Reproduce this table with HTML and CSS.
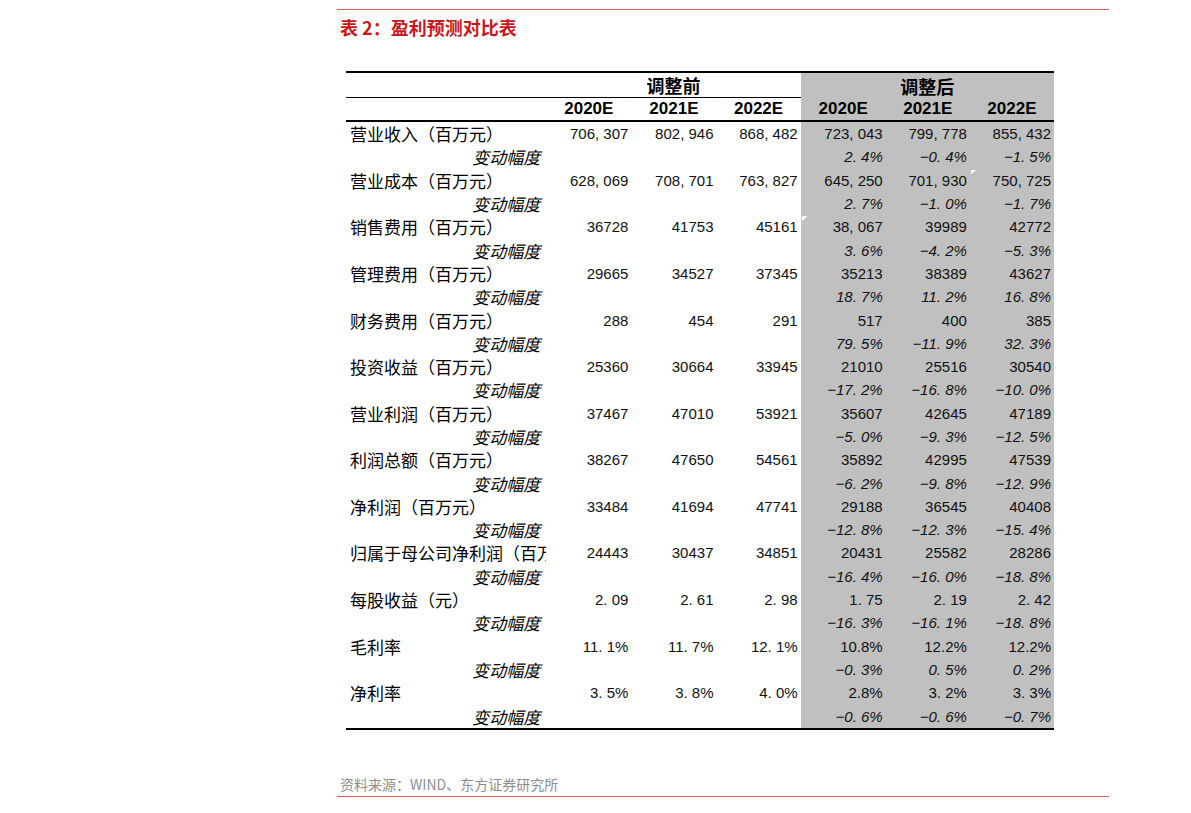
FILE: index.html
```html
<!DOCTYPE html>
<html lang="zh-CN">
<head>
<meta charset="utf-8">
<title>表 2：盈利预测对比表</title>
<link rel="stylesheet" href="styles.css">
</head>
<body>
<div class="report">
  <h2 class="title">表 2：盈利预测对比表</h2>
  <table class="fc">
    <colgroup>
      <col class="c-lab"><col class="c-n"><col class="c-n"><col class="c-n3"><col class="c-n"><col class="c-n3"><col class="c-n3">
    </colgroup>
    <thead>
      <tr class="h1">
        <th class="lab ruled"></th>
        <th colspan="3" class="grp ruled">调整前</th>
        <th colspan="3" class="grp adj">调整后</th>
      </tr>
      <tr class="h2">
        <th class="lab"></th>
        <th class="yr">2020E</th><th class="yr">2021E</th><th class="yr">2022E</th>
        <th class="yr adj">2020E</th><th class="yr adj">2021E</th><th class="yr adj">2022E</th>
      </tr>
    </thead>
    <tbody>
      <tr><td class="lab">营业收入（百万元）</td><td class="num">706, 307</td><td class="num">802, 946</td><td class="num">868, 482</td><td class="num adj">723, 043</td><td class="num adj">799, 778</td><td class="num adj">855, 432</td></tr>
      <tr class="chg"><td class="lab sub">变动幅度</td><td></td><td></td><td></td><td class="num adj">2. 4%</td><td class="num adj">−0. 4%</td><td class="num adj">−1. 5%</td></tr>
      <tr><td class="lab">营业成本（百万元）</td><td class="num">628, 069</td><td class="num">708, 701</td><td class="num">763, 827</td><td class="num adj">645, 250</td><td class="num adj">701, 930</td><td class="num adj mark">750, 725</td></tr>
      <tr class="chg"><td class="lab sub">变动幅度</td><td></td><td></td><td></td><td class="num adj">2. 7%</td><td class="num adj">−1. 0%</td><td class="num adj">−1. 7%</td></tr>
      <tr><td class="lab">销售费用（百万元）</td><td class="num">36728</td><td class="num">41753</td><td class="num">45161</td><td class="num adj mark">38, 067</td><td class="num adj">39989</td><td class="num adj">42772</td></tr>
      <tr class="chg"><td class="lab sub">变动幅度</td><td></td><td></td><td></td><td class="num adj">3. 6%</td><td class="num adj">−4. 2%</td><td class="num adj">−5. 3%</td></tr>
      <tr><td class="lab">管理费用（百万元）</td><td class="num">29665</td><td class="num">34527</td><td class="num">37345</td><td class="num adj">35213</td><td class="num adj">38389</td><td class="num adj">43627</td></tr>
      <tr class="chg"><td class="lab sub">变动幅度</td><td></td><td></td><td></td><td class="num adj">18. 7%</td><td class="num adj">11. 2%</td><td class="num adj">16. 8%</td></tr>
      <tr><td class="lab">财务费用（百万元）</td><td class="num">288</td><td class="num">454</td><td class="num">291</td><td class="num adj">517</td><td class="num adj">400</td><td class="num adj">385</td></tr>
      <tr class="chg"><td class="lab sub">变动幅度</td><td></td><td></td><td></td><td class="num adj">79. 5%</td><td class="num adj">−11. 9%</td><td class="num adj">32. 3%</td></tr>
      <tr><td class="lab">投资收益（百万元）</td><td class="num">25360</td><td class="num">30664</td><td class="num">33945</td><td class="num adj">21010</td><td class="num adj">25516</td><td class="num adj">30540</td></tr>
      <tr class="chg"><td class="lab sub">变动幅度</td><td></td><td></td><td></td><td class="num adj">−17. 2%</td><td class="num adj">−16. 8%</td><td class="num adj">−10. 0%</td></tr>
      <tr><td class="lab">营业利润（百万元）</td><td class="num">37467</td><td class="num">47010</td><td class="num">53921</td><td class="num adj">35607</td><td class="num adj">42645</td><td class="num adj">47189</td></tr>
      <tr class="chg"><td class="lab sub">变动幅度</td><td></td><td></td><td></td><td class="num adj">−5. 0%</td><td class="num adj">−9. 3%</td><td class="num adj">−12. 5%</td></tr>
      <tr><td class="lab">利润总额（百万元）</td><td class="num">38267</td><td class="num">47650</td><td class="num">54561</td><td class="num adj">35892</td><td class="num adj">42995</td><td class="num adj">47539</td></tr>
      <tr class="chg"><td class="lab sub">变动幅度</td><td></td><td></td><td></td><td class="num adj">−6. 2%</td><td class="num adj">−9. 8%</td><td class="num adj">−12. 9%</td></tr>
      <tr><td class="lab">净利润（百万元）</td><td class="num">33484</td><td class="num">41694</td><td class="num">47741</td><td class="num adj">29188</td><td class="num adj">36545</td><td class="num adj">40408</td></tr>
      <tr class="chg"><td class="lab sub">变动幅度</td><td></td><td></td><td></td><td class="num adj">−12. 8%</td><td class="num adj">−12. 3%</td><td class="num adj">−15. 4%</td></tr>
      <tr><td class="lab">归属于母公司净利润（百万元）</td><td class="num">24443</td><td class="num">30437</td><td class="num">34851</td><td class="num adj">20431</td><td class="num adj">25582</td><td class="num adj">28286</td></tr>
      <tr class="chg"><td class="lab sub">变动幅度</td><td></td><td></td><td></td><td class="num adj">−16. 4%</td><td class="num adj">−16. 0%</td><td class="num adj">−18. 8%</td></tr>
      <tr><td class="lab">每股收益（元）</td><td class="num">2. 09</td><td class="num">2. 61</td><td class="num">2. 98</td><td class="num adj">1. 75</td><td class="num adj">2. 19</td><td class="num adj">2. 42</td></tr>
      <tr class="chg"><td class="lab sub">变动幅度</td><td></td><td></td><td></td><td class="num adj">−16. 3%</td><td class="num adj">−16. 1%</td><td class="num adj">−18. 8%</td></tr>
      <tr><td class="lab">毛利率</td><td class="num">11. 1%</td><td class="num">11. 7%</td><td class="num">12. 1%</td><td class="num adj">10.8%</td><td class="num adj">12.2%</td><td class="num adj">12.2%</td></tr>
      <tr class="chg"><td class="lab sub">变动幅度</td><td></td><td></td><td></td><td class="num adj">−0. 3%</td><td class="num adj">0. 5%</td><td class="num adj">0. 2%</td></tr>
      <tr><td class="lab">净利率</td><td class="num">3. 5%</td><td class="num">3. 8%</td><td class="num">4. 0%</td><td class="num adj">2.8%</td><td class="num adj">3. 2%</td><td class="num adj">3. 3%</td></tr>
      <tr class="chg"><td class="lab sub">变动幅度</td><td></td><td></td><td></td><td class="num adj">−0. 6%</td><td class="num adj">−0. 6%</td><td class="num adj">−0. 7%</td></tr>
    </tbody>
  </table>
  <p class="source">资料来源：WIND、东方证券研究所</p>
</div>
</body>
</html>
```

FILE: styles.css
```css
html, body {
  margin: 0;
  padding: 0;
  background: #ffffff;
}

.report {
  margin: 9px 0 0 337px;
  width: 772px;
  border-top: 1px solid #e05a5a;
  border-bottom: 1px solid #e05a5a;
}

.title {
  margin: 5px 0 0 3px;
  font-family: "Noto Sans CJK SC", sans-serif;
  font-size: 18px;
  line-height: 24px;
  font-weight: 700;
  color: #c8171d;
}

.fc {
  margin: 32px 0 0 9px;
  width: 708px;
  table-layout: fixed;
  border-collapse: separate;
  border-spacing: 0;
  border-top: 2px solid #000;
  border-bottom: 2px solid #000;
  font-family: "Liberation Sans", Arial, sans-serif;
  color: #111;
}

.c-lab { width: 200px; }
.c-n { width: 85px; }
.c-n3 { width: 84px; }

.fc th, .fc td {
  padding: 0;
  white-space: nowrap;
  overflow: hidden;
}

.h1 { height: 25px; }
.h2 { height: 24px; }

.h1 th.ruled {
  border-bottom: 1px solid #000;
}

.h2 th {
  border-bottom: 2px solid #000;
}

.grp {
  font-family: "Noto Sans CJK SC", sans-serif;
  font-size: 18px;
  font-weight: 700;
  line-height: 24px;
  text-align: center;
  color: #000;
}

.yr {
  font-size: 17px;
  font-weight: 700;
  text-align: center;
  line-height: 22px;
  color: #000;
}

.fc tbody tr { height: 23.3px; }

.fc td {
  line-height: 22px;
  padding-top: 1px;
}

.lab {
  text-align: left;
  padding-left: 4px !important;
  font-family: "Noto Sans CJK SC", sans-serif;
  font-size: 17px;
  color: #000;
}

.sub {
  text-align: right;
  padding-right: 6px !important;
  font-style: italic;
}

.num {
  text-align: right;
  padding-right: 3px !important;
  font-size: 15px;
}

.chg .num {
  font-style: italic;
}

.adj {
  background: #c0c0c0;
}

.mark {
  position: relative;
}

.mark::before {
  content: "";
  position: absolute;
  left: 1px;
  top: 1px;
  width: 6px;
  height: 5px;
  background: #ffffff;
  clip-path: polygon(0 0, 100% 0, 0 100%);
}

.source {
  margin: 44px 0 2px 3px;
  font-family: "Noto Sans CJK SC", sans-serif;
  font-size: 14px;
  line-height: 20px;
  color: #8e8e8e;
}
```
